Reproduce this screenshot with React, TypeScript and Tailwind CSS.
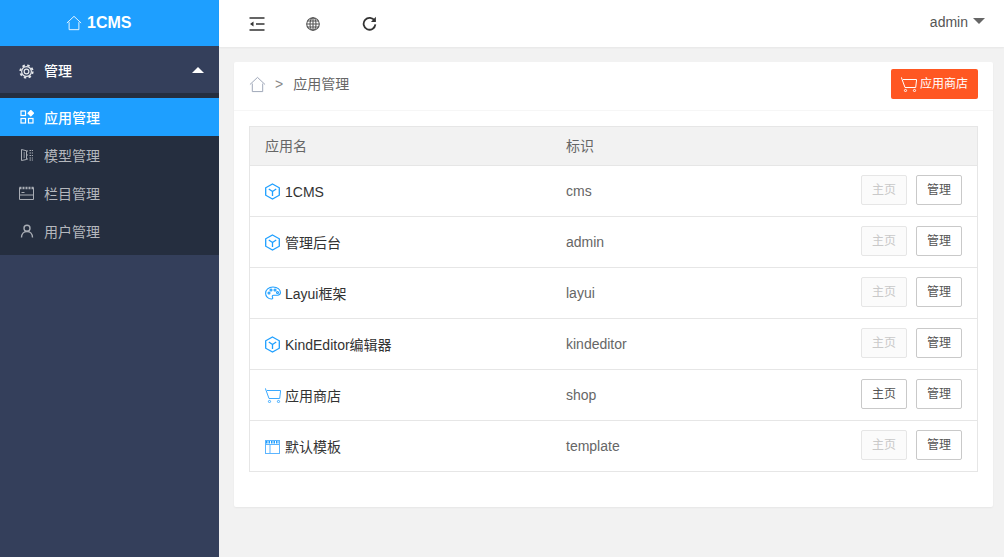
import React, { ReactNode } from "react";

const HomeIcon = ({ className }: { className?: string }) => (
  <svg viewBox="0 0 18 18" fill="none" stroke="currentColor" strokeWidth="1" className={className}>
    <path d="M1 9 9 1.500 17 9M3.500 8v8.500h11V8" />
  </svg>
);

const CartIcon = ({ className }: { className?: string }) => (
  <svg viewBox="0 0 16 15" fill="none" stroke="currentColor" strokeWidth="1" className={className}>
    <path d="M.3.300 4 10.500h10.700L15.600 2.500H2" />
    <circle cx="4.500" cy="13.500" r="1.100" />
    <circle cx="13.500" cy="13.500" r="1.100" />
  </svg>
);

const BoxIcon = () => (
  <svg viewBox="0 0 15 17" fill="none" stroke="currentColor" strokeWidth="1.300" className="w-[15px] h-[17px] text-[#1e9fff]">
    <path d="M7.500 1 14.300 4.800v7.400L7.500 16 .7 12.200V4.800Z" />
    <path d="M3.800 6 7.500 8.500 11.200 6M7.500 8.500V13" />
  </svg>
);

const PaletteIcon = () => (
  <svg viewBox="0 0 16 14" fill="none" stroke="currentColor" strokeWidth="1.100" className="w-4 h-3.5 text-[#1e9fff]">
    <path d="M8 1C3.500 1 .6 3.800.6 7.200c0 3.300 2.700 5.800 5.900 5.800 1.500 0 1.500-1 1-1.800-.6-1 0-2 1.200-2h3.800c2 0 2.900-1 2.900-2.600C15.400 3.500 12.500 1 8 1Z" />
    <circle cx="4" cy="7" r="1" />
    <circle cx="6" cy="4" r="1" />
    <circle cx="10" cy="4" r="1" />
    <circle cx="12.500" cy="6.500" r="1" />
  </svg>
);

const WindowIcon = () => (
  <svg viewBox="0 0 15 14" fill="none" stroke="#5cb5ff" strokeWidth="1" className="mt-[2px] w-[15px] h-3.5">
    <rect x=".5" y=".5" width="14" height="13" />
    <path d="M1 2.300h13" strokeWidth="2.400" stroke="#1e9fff" strokeDasharray="1.500 1" />
    <path d="M.5 4.500h14M5 4.500v9" />
  </svg>
);

const AppsIcon = () => (
  <svg viewBox="0 0 14 14" fill="none" stroke="currentColor" strokeWidth="1.200" className="w-3.5 h-3.5 text-white">
    <rect x="1" y="1" width="4.500" height="4.500" />
    <rect x="1" y="8.500" width="4.500" height="4.500" />
    <rect x="8.500" y="8.500" width="4.500" height="4.500" />
    <path d="M10.800.5 13.500 3.200 10.800 5.900 8.100 3.200Z" fill="currentColor" />
  </svg>
);

const ModelIcon = () => (
  <svg viewBox="0 0 12 12" fill="none" stroke="currentColor" strokeWidth="1" className="w-3 h-3 text-[#a9adb5]">
    <path d="M.5.500 5.500 1.800v8.700L.5 11.500Z" />
    <path d="M2.500 4h1.500M2.500 6h1.500M2.500 8h1.500" />
    <path d="M5.500 2h1.500M5.500 6h1.500M5.500 10h1.500" />
    <path d="M8.500 1.500H12M8.500 4H12M8.500 6.500H12M8.500 9H12M8.500 11H12" strokeDasharray="1.500 .8" />
  </svg>
);

const ColumnIcon = () => (
  <svg viewBox="0 0 15 14" fill="none" stroke="currentColor" strokeWidth="1" className="w-[15px] h-3.5 text-[#a9adb5]">
    <path d="M.5 1.500v12h14v-12" />
    <path d="M.5 2h14" strokeWidth="2.600" strokeDasharray="2 1" />
    <path d="M2.500 6.500h3M.5 9h14" />
  </svg>
);

const UserIcon = () => (
  <svg viewBox="0 0 14 14" fill="none" stroke="currentColor" strokeWidth="1.400" className="w-3.5 h-3.5 text-[#a9adb5]">
    <circle cx="7" cy="4.200" r="3" />
    <path d="M1.500 13.500c0-3.500 2.200-6 5.500-6s5.500 2.500 5.500 6" />
  </svg>
);

const GearIcon = () => (
  <svg viewBox="0 0 16 16" fill="none" stroke="currentColor" strokeWidth="1.300" className="w-[15px] h-[15px] text-[#e4e6ea]">
    <circle cx="8" cy="8" r="5.200" />
    <circle cx="8" cy="8" r="2.500" />
    <circle cx="8" cy="8" r="6.600" strokeWidth="2" strokeDasharray="2.600 2.580" />
  </svg>
);

const MenuFoldIcon = () => (
  <svg viewBox="0 0 16 14" fill="none" stroke="currentColor" strokeWidth="1.600" className="w-4 h-3.5 text-[#333]">
    <path d="M.5 1h15M7 7h8.500M.5 13h15" />
    <path d="M4.500 4.500v5L1 7Z" fill="currentColor" stroke="none" />
  </svg>
);

const GlobeIcon = () => (
  <svg viewBox="0 0 14 14" fill="none" stroke="#555" strokeWidth="1.100" className="w-3.5 h-3.5">
    <circle cx="7" cy="7" r="6.300" />
    <ellipse cx="7" cy="7" rx="3" ry="6.300" />
    <path d="M7 .7v12.600M.7 7h12.600M1.500 4h11M1.500 10h11" />
  </svg>
);

const RefreshIcon = () => (
  <svg viewBox="0 0 16 16" fill="none" stroke="#333" strokeWidth="1.900" className="w-[15px] h-[15px]">
    <path d="M13.500 5.200A6.300 6.300 0 1 0 14.300 9" />
    <path d="M14.800.800v5.600H9.500Z" fill="#333" stroke="none" />
  </svg>
);

const navItems: { label: string; icon: ReactNode; active?: boolean }[] = [
  { label: "应用管理", icon: <AppsIcon />, active: true },
  { label: "模型管理", icon: <ModelIcon /> },
  { label: "栏目管理", icon: <ColumnIcon /> },
  { label: "用户管理", icon: <UserIcon /> },
];

const apps: { name: string; id: string; icon: ReactNode; home?: boolean }[] = [
  { name: "1CMS", id: "cms", icon: <BoxIcon /> },
  { name: "管理后台", id: "admin", icon: <BoxIcon /> },
  { name: "Layui框架", id: "layui", icon: <PaletteIcon /> },
  { name: "KindEditor编辑器", id: "kindeditor", icon: <BoxIcon /> },
  { name: "应用商店", id: "shop", icon: <CartIcon className="w-4 h-[15px] text-[#3aa9ff]" />, home: true },
  { name: "默认模板", id: "template", icon: <WindowIcon /> },
];

export default function App() {
  return (
    <div className="flex h-[557px] w-[1004px] overflow-hidden bg-[#f2f2f2] text-[14px] text-[#333] font-['Liberation_Sans','Noto_Sans_CJK_SC',sans-serif]">
      <aside className="w-[219px] shrink-0 bg-[#343f5b]">
        <div className="flex h-[46px] items-center gap-[5px] bg-[#1e9fff] pl-[66px] text-[16px] font-bold text-white">
          <HomeIcon className="h-4 w-4" />
          <span>1CMS</span>
        </div>
        <div className="flex h-[47px] items-center pl-[19px] pr-[15px] text-white">
          <span className="mt-[3px]"><GearIcon /></span>
          <span className="ml-[10px] mt-[3px] font-medium">管理</span>
          <span className="ml-auto border-x-[6px] border-b-[6px] border-x-transparent border-b-white" />
        </div>
        <nav className="bg-[#252e3f] pt-[5px] pb-[5px]">
          {navItems.map((item) => (
            <div
              key={item.label}
              className={`flex h-[38px] items-center gap-[10px] pl-[19px] ${item.active ? "bg-[#1e9fff] text-white font-medium" : "text-[#b5b8be]"}`}
            >
              <span className="flex w-[15px] justify-center">{item.icon}</span>
              <span className="pt-[2px]">{item.label}</span>
            </div>
          ))}
        </nav>
      </aside>

      <div className="flex min-w-0 flex-1 flex-col">
        <header className="flex h-[47px] shrink-0 items-center bg-white pl-[30px] pr-[19px] shadow-[0_1px_2px_rgba(0,0,0,0.05)]">
          <MenuFoldIcon />
          <span className="ml-[41px]"><GlobeIcon /></span>
          <span className="ml-[42px]"><RefreshIcon /></span>
          <span className="ml-auto mb-[2px] text-[#555]">admin</span>
          <span className="ml-[5px] mb-[6px] border-x-[6px] border-t-[6px] border-x-transparent border-t-[#666]" />
        </header>

        <main className="px-[15px] pt-[15px]">
          <section className="h-[445px] w-[759px] rounded-[2px] bg-white shadow-[0_1px_2px_rgba(0,0,0,0.05)]">
            <div className="flex h-[49px] items-center border-b border-[#f6f6f6] px-[15px] pb-[4px]">
              <HomeIcon className="h-[17px] w-[17px] text-[#9aa3b5]" />
              <span className="ml-[9px] text-[#888]">&gt;</span>
              <span className="ml-[10px] text-[#666]">应用管理</span>
              <button className="ml-auto flex h-[30px] w-[87px] items-center justify-center rounded-[2px] bg-[#ff5722] text-[12px] text-white">
                <CartIcon className="h-[15px] w-4" />
                <span className="ml-[3px]">应用商店</span>
              </button>
            </div>

            <div className="mx-[15px] mt-[15px] border border-[#e6e6e6]">
              <div className="flex h-[39px] items-center border-b border-[#e6e6e6] bg-[#f2f2f2] pl-[15px] text-[#666]">
                <span className="w-[301px]">应用名</span>
                <span>标识</span>
              </div>
              {apps.map((app, i) => (
                <div
                  key={app.id}
                  className={`flex items-center px-[15px] ${i < apps.length - 1 ? "h-[51px] border-b border-[#e6e6e6]" : "h-[50px]"}`}
                >
                  <span className="flex w-[301px] items-center gap-[3px]">
                    <span className="flex w-[17px] justify-start">{app.icon}</span>
                    <span className="pt-[2px]">{app.name}</span>
                  </span>
                  <span className="text-[#666]">{app.id}</span>
                  <button
                    className={`ml-auto mb-[2px] h-[30px] w-[46px] rounded-[2px] border text-[12px] ${app.home ? "border-[#c9c9c9] text-[#555]" : "border-[#e6e6e6] bg-[#fbfbfb] text-[#c9c9c9]"}`}
                  >
                    主页
                  </button>
                  <button className="ml-[9px] mb-[2px] h-[30px] w-[46px] rounded-[2px] border border-[#c9c9c9] text-[12px] text-[#555]">
                    管理
                  </button>
                </div>
              ))}
            </div>
          </section>
        </main>
      </div>
    </div>
  );
}
